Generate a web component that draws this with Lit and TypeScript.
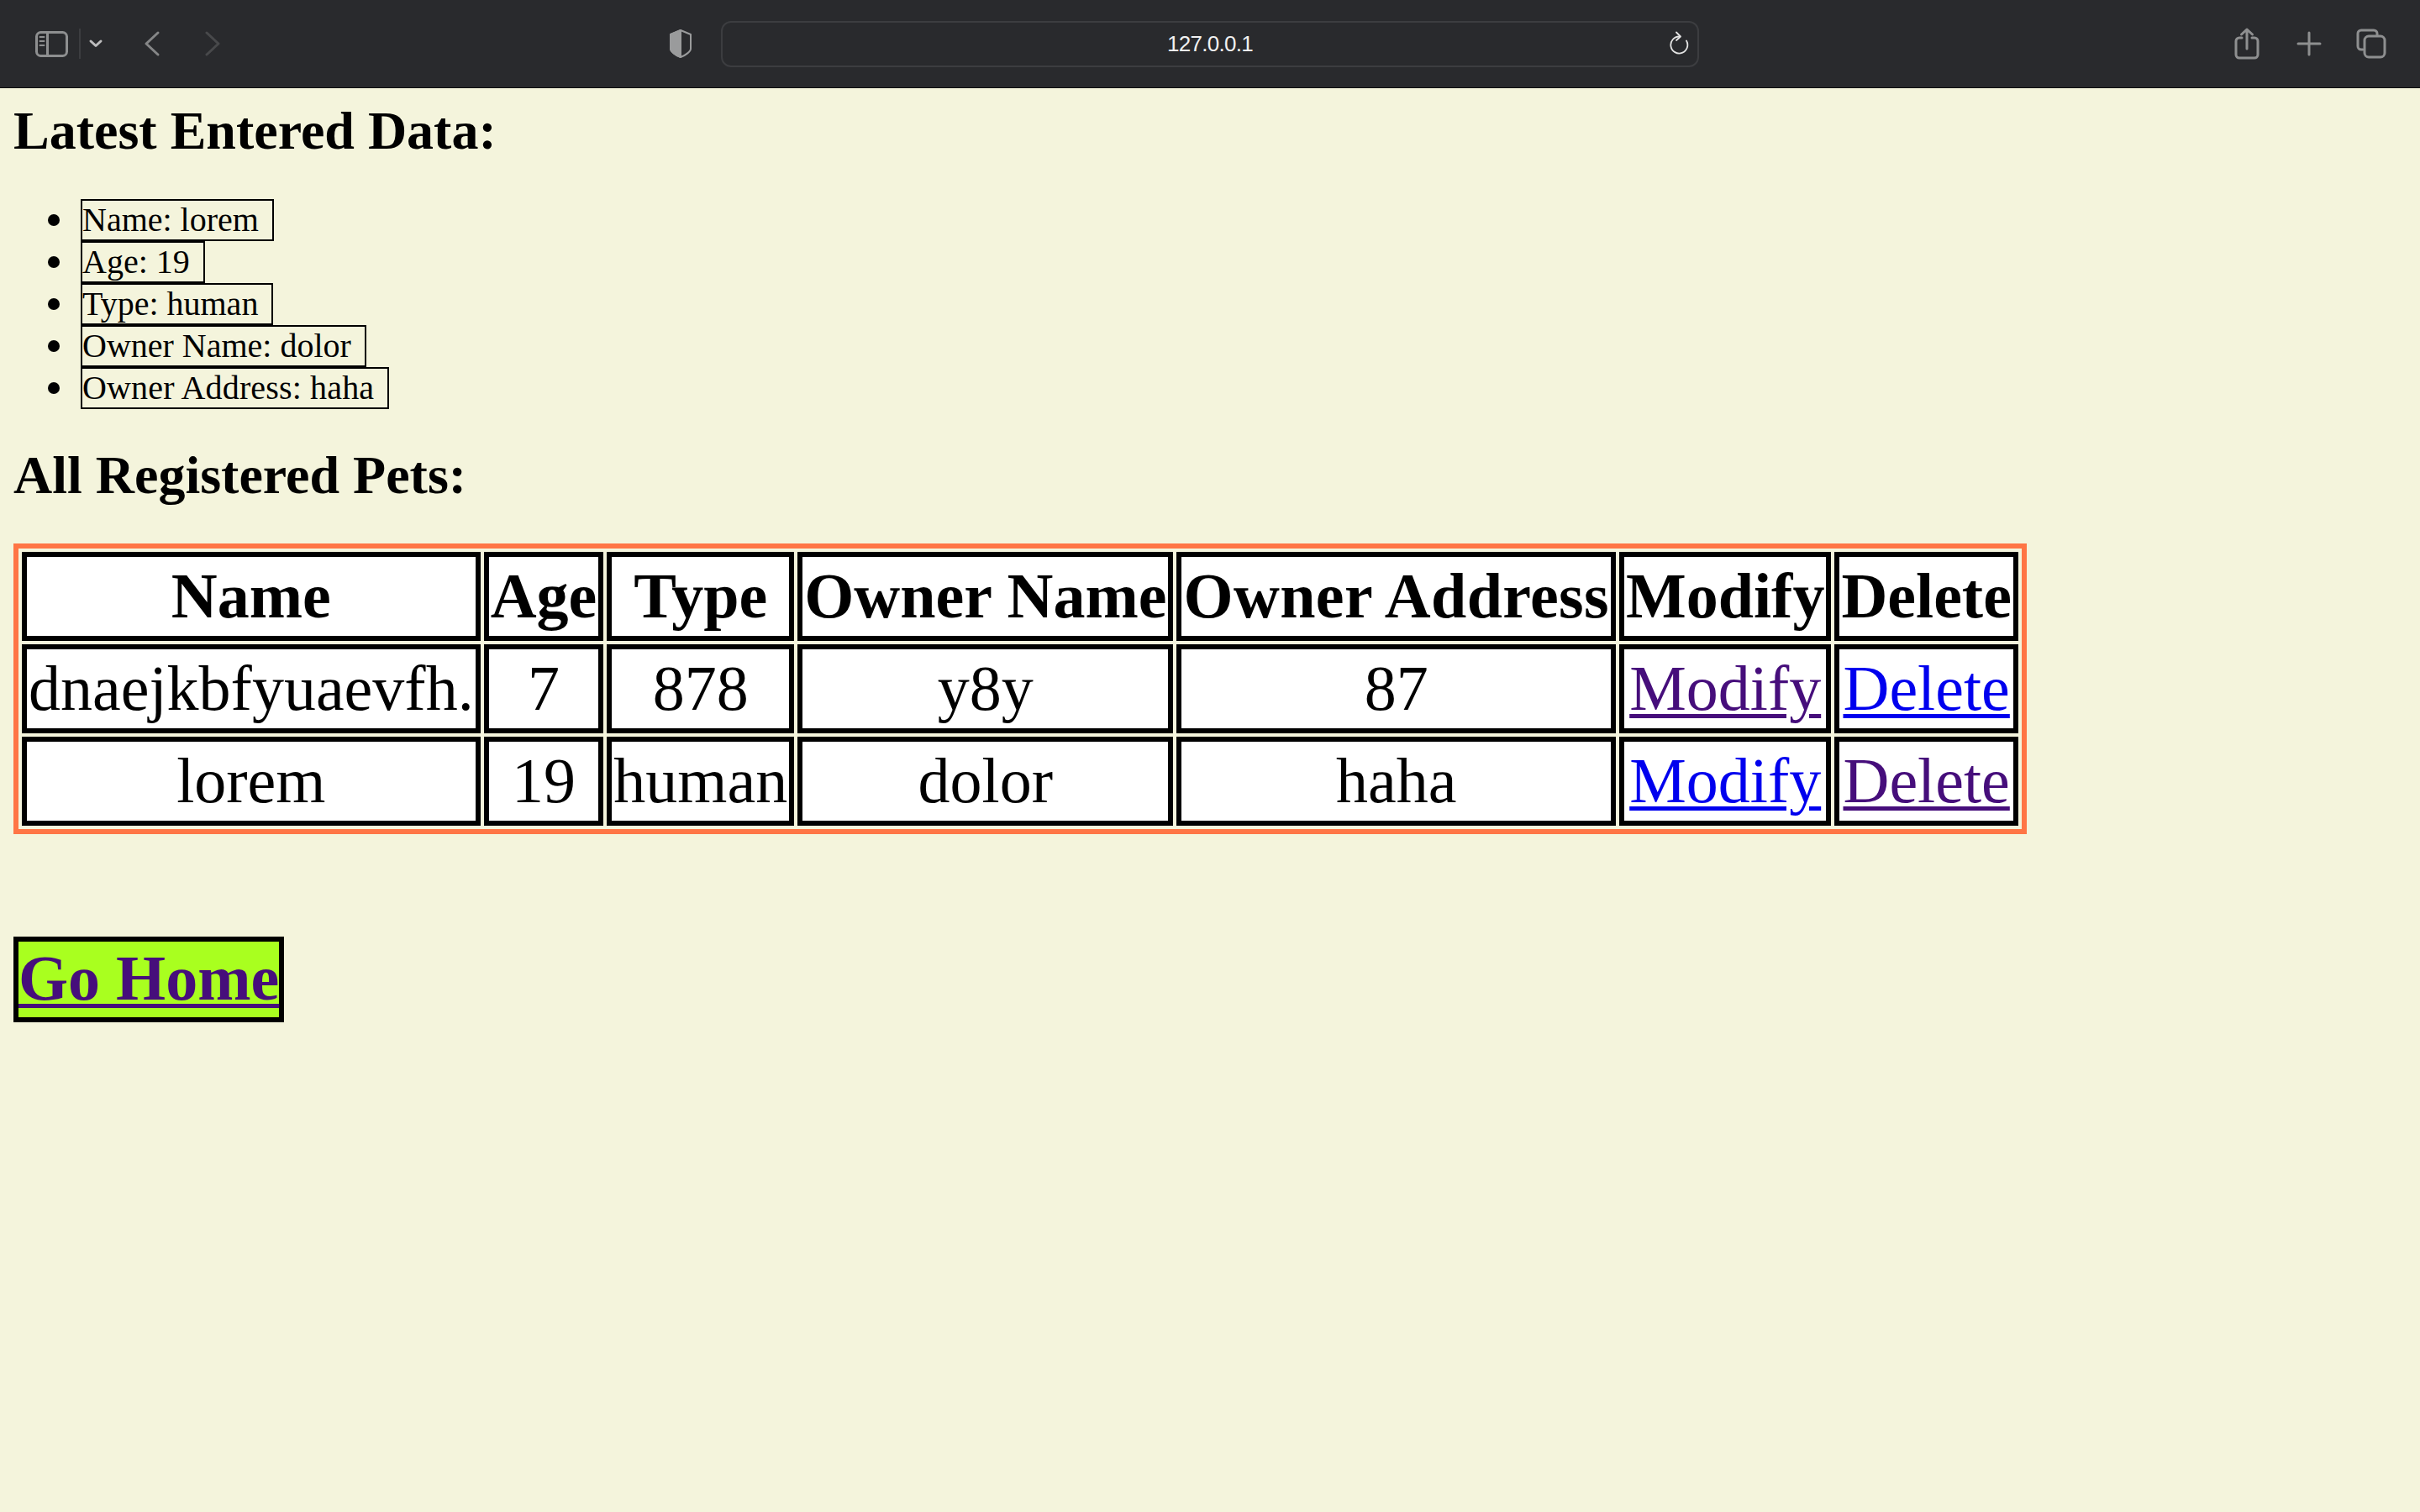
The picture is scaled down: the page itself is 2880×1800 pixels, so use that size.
import { LitElement, html, css } from "lit";
import { customElement } from "lit/decorators.js";

const rows = [
  { name: "dnaejkbfyuaevfh.", age: "7", type: "878", owner: "y8y", addr: "87", modVisited: true, delVisited: false },
  { name: "lorem", age: "19", type: "human", owner: "dolor", addr: "haha", modVisited: false, delVisited: true },
];
const latest = ["Name: lorem", "Age: 19", "Type: human", "Owner Name: dolor", "Owner Address: haha"];

@customElement("app-root")
export class AppRoot extends LitElement {
  static styles = css`
    :host { display: block; min-height: 1800px; background: #f4f4dc; color: #000; font-family: "Liberation Serif", "Times New Roman", serif; }
    .bar { display: flex; align-items: center; height: 104px; background: #292a2d; border-bottom: 1px solid #0c0c0d; padding-left: 40px; }
    .bar svg { display: block; flex: none; fill: none; stroke-linecap: round; stroke-linejoin: round; }
    .sb { width: 44px; height: 34px; margin-right: 10px; }
    .divider { width: 2px; height: 36px; background: #3c3d40; margin-right: 9px; }
    .chev { width: 18px; height: 12px; margin-right: 48px; }
    .back { width: 20px; height: 32px; margin-right: 52px; }
    .fwd { width: 20px; height: 32px; margin-right: 531px; }
    .shield { width: 32px; height: 36px; margin-right: 32px; }
    .url { width: 1164px; height: 55px; box-sizing: border-box; border: 2px solid #3c3d40; border-radius: 12px; display: grid; grid-template-columns: 1fr auto 1fr; align-items: center; margin-right: 636px; }
    .url span { grid-column: 2; font: 26px/1 "Liberation Sans", Arial, sans-serif; letter-spacing: -0.7px; color: #f1f1f1; }
    .reload { grid-column: 3; justify-self: end; width: 26px; height: 30px; margin-right: 10px; }
    .share { width: 32px; height: 40px; margin-right: 43px; }
    .plus { width: 30px; height: 30px; margin-right: 41px; }
    .tabs { width: 36px; height: 38px; }

    main { padding: 16px; }
    h1 { font-size: 64px; line-height: 70px; font-weight: 700; margin: 0 0 46px; }
    h1.second { margin-top: 44px; }
    ul { margin: 0; padding: 0 0 0 41px; font-size: 40px; list-style: none; }
    li { display: flex; align-items: center; height: 50px; line-height: 46px; }
    li::before { content: ""; width: 14px; height: 14px; border-radius: 50%; background: #000; margin-right: 25px; }
    li span { display: block; border: 2px solid #000; padding-right: 16px; height: 46px; }
    li:last-child span { letter-spacing: 0.15px; }

    table { border: 6px solid #ff7545; border-spacing: 4px; border-collapse: separate; font-size: 76px; line-height: 90px; margin-bottom: 122px; }
    th, td { border: 6px solid #000; background: #fff; padding: 1px 2px 3px; text-align: center; white-space: nowrap; }
    th.wide { letter-spacing: 0.36px; }
    a { text-decoration: underline; text-decoration-thickness: 5px; text-underline-offset: 5px; color: #0000ee; }
    a.visited { color: #460e7b; }
    .home { display: inline-block; vertical-align: top; border: 6px solid #000; background: #a9ff1f; font-size: 76px; line-height: 86px; padding-bottom: 4px; font-weight: 700; }
  `;

  render() {
    return html`
      <div class="bar">
        <svg class="sb" viewBox="0 0 44 34" stroke="#8e8f90" stroke-width="3">
          <rect x="3.5" y="3.5" width="36" height="28" rx="5"></rect>
          <path d="M16.5 3.5v28"></path>
          <path d="M7.5 9h5M7.5 14h5M7.5 19h5" stroke-width="2"></path>
        </svg>
        <div class="divider"></div>
        <svg class="chev" viewBox="0 0 18 12" stroke="#bdbdbe" stroke-width="3"><path d="M3 3l6 5.5L15 3"></path></svg>
        <svg class="back" viewBox="0 0 20 32" stroke="#858687" stroke-width="3"><path d="M17 3L3 16l14 13"></path></svg>
        <svg class="fwd" viewBox="0 0 20 32" stroke="#48494b" stroke-width="3"><path d="M3 3l14 13L3 29"></path></svg>
        <svg class="shield" viewBox="0 0 32 36" stroke="#9a9b9c" stroke-width="2">
          <path d="M16 2l12 5v17c0 3-6 8-12 10C10 32 4 27 4 24V7z"></path>
          <path d="M16 2L4 7v17c0 3 6 8 12 10z" fill="#9a9b9c"></path>
        </svg>
        <div class="url">
          <span>127.0.0.1</span>
          <svg class="reload" viewBox="0 0 26 30" stroke="#e4e4e4" stroke-width="1.8">
            <path d="M14.5 6.5a10 10 0 1 0 8.5 5"></path>
            <path d="M11 1.5l5 5-5 4.5"></path>
          </svg>
        </div>
        <svg class="share" viewBox="0 0 32 40" stroke="#8e8f90" stroke-width="3">
          <path d="M10 13H7a4 4 0 0 0-4 4v16a4 4 0 0 0 4 4h18a4 4 0 0 0 4-4V17a4 4 0 0 0-4-4h-3"></path>
          <path d="M16 26V3M9.5 9L16 3l6.500 6"></path>
        </svg>
        <svg class="plus" viewBox="0 0 30 30" stroke="#8e8f90" stroke-width="3"><path d="M15 2v26M2 15h26"></path></svg>
        <svg class="tabs" viewBox="0 0 36 38" stroke="#8e8f90" stroke-width="3">
          <path d="M8 26H6a4 4 0 0 1-4-4V7a4 4 0 0 1 4-4h15a4 4 0 0 1 4 4v2"></path>
          <rect x="10" y="10" width="24" height="25" rx="5"></rect>
        </svg>
      </div>
      <main>
        <h1>Latest Entered Data:</h1>
        <ul>${latest.map((t) => html`<li><span>${t}</span></li>`)}</ul>
        <h1 class="second">All Registered Pets:</h1>
        <table>
          <tr><th>Name</th><th>Age</th><th>Type</th><th>Owner Name</th><th class="wide">Owner Address</th><th>Modify</th><th>Delete</th></tr>
          ${rows.map((r) => html`<tr>
            <td>${r.name}</td><td>${r.age}</td><td>${r.type}</td><td>${r.owner}</td><td>${r.addr}</td>
            <td><a href="#" class=${r.modVisited ? "visited" : ""}>Modify</a></td>
            <td><a href="#" class=${r.delVisited ? "visited" : ""}>Delete</a></td>
          </tr>`)}
        </table>
        <a href="#" class="home visited">Go Home</a>
      </main>
    `;
  }
}
